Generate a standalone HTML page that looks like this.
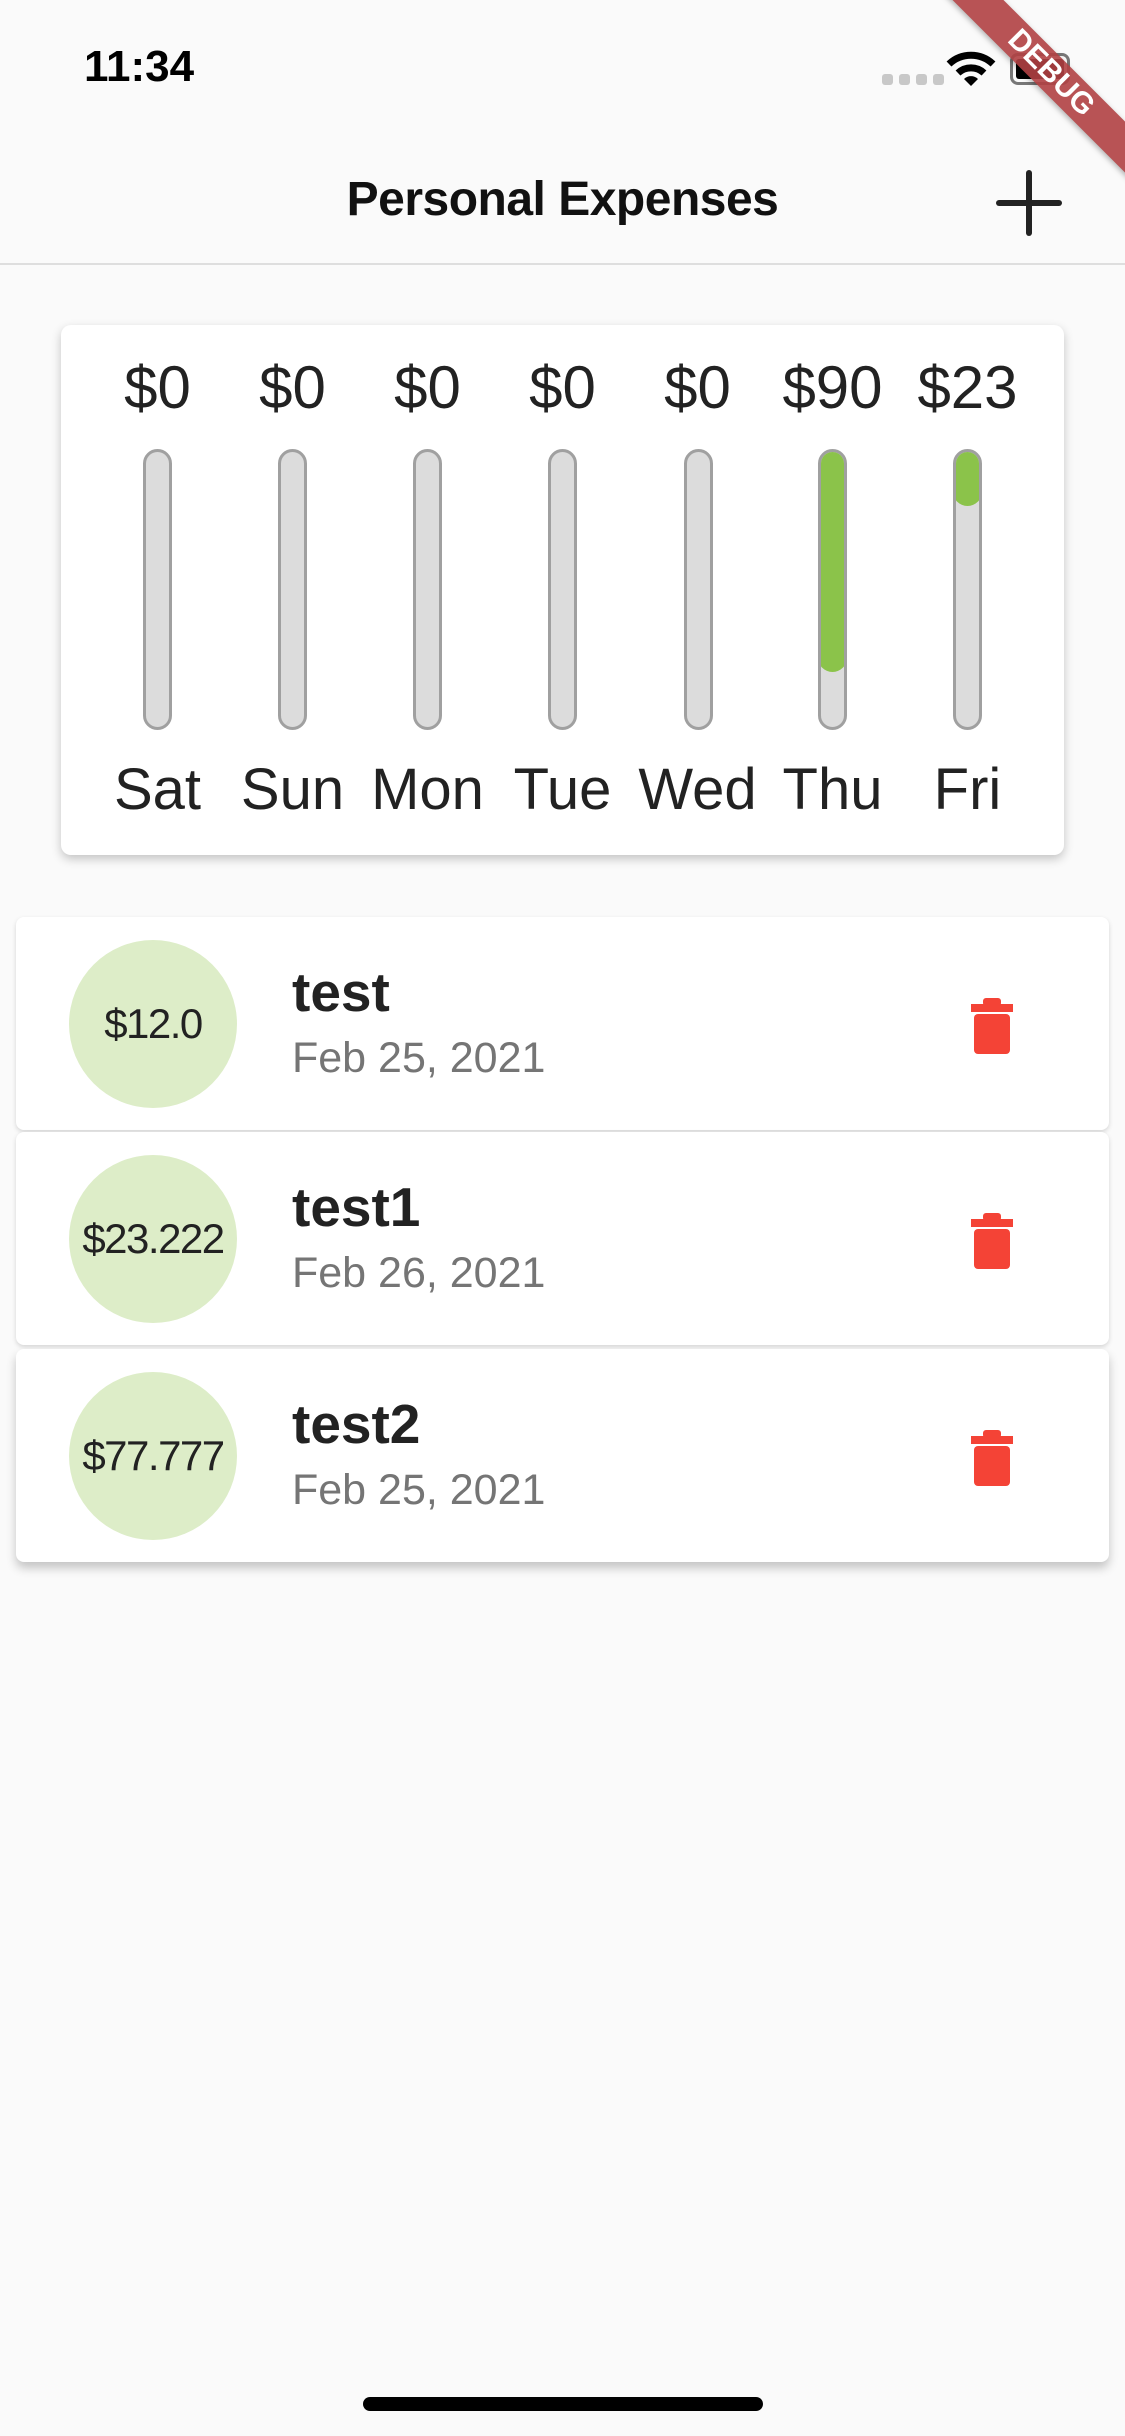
<!DOCTYPE html>
<html><head><meta charset="utf-8"><style>
*{margin:0;padding:0;box-sizing:border-box}
body{width:1125px;height:2436px;background:#fafafa;position:relative;overflow:hidden;font-family:"Liberation Sans",sans-serif;color:#222}
.abs{position:absolute}
.card{position:absolute;background:#fff;border-radius:10px;box-shadow:0 4px 10px rgba(0,0,0,.22)}
.amt{position:absolute;width:135px;text-align:center;font-size:60px;top:353px;color:#222;white-space:nowrap}
.day{position:absolute;width:135px;text-align:center;font-size:58px;top:756px;color:#222;white-space:nowrap}
.bar{position:absolute;top:449px;width:29px;height:281px;background:#dcdcdc;border:3px solid #a0a0a0;border-radius:15px;overflow:hidden}
.fill{position:absolute;left:-3px;top:-3px;width:29px;background:#8bc34a;border-radius:15px}
.item{position:absolute;left:16px;width:1093px;height:213px;background:#fff;border-radius:8px;box-shadow:0 2px 5px rgba(0,0,0,.15)}
.circ{position:absolute;left:53px;top:23px;width:168px;height:168px;border-radius:50%;background:#ddedc8;display:flex;align-items:center;justify-content:center;font-size:42px;color:#222;letter-spacing:-1.5px}
.t{position:absolute;left:276px;top:43px;font-size:55px;font-weight:bold;color:#222}
.d{position:absolute;left:276px;top:117px;font-size:43px;color:#757575}
.tr{position:absolute;left:955px;top:81px}
</style></head><body>
<div class="abs" style="left:84px;top:42px;font-size:44px;font-weight:bold;color:#000">11:34</div>
<div class="abs" style="left:882px;top:74px;display:flex;gap:6px"><i style="width:11px;height:11px;border-radius:3px;background:#c8c8c8;display:block"></i><i style="width:11px;height:11px;border-radius:3px;background:#c8c8c8;display:block"></i><i style="width:11px;height:11px;border-radius:3px;background:#c8c8c8;display:block"></i><i style="width:11px;height:11px;border-radius:3px;background:#c8c8c8;display:block"></i></div>
<svg class="abs" style="left:946px;top:50px" width="50" height="38" viewBox="0 0 50 38"><path d="M3 14 A32 32 0 0 1 47 14" stroke="#000" stroke-width="7" fill="none"/><path d="M12 23 A19 19 0 0 1 38 23" stroke="#000" stroke-width="7" fill="none"/><path d="M18 29 L25 36 L32 29 A10 10 0 0 0 18 29Z" fill="#000"/></svg>
<div class="abs" style="left:1010px;top:53px;width:60px;height:32px;border:3px solid #777;border-radius:8px;padding:3px"><div style="background:#000;width:100%;height:100%;border-radius:3px"></div></div>
<div class="abs" style="left:0;width:1125px;text-align:center;top:172px;font-size:48px;font-weight:bold;color:#111;letter-spacing:-0.5px">Personal Expenses</div>
<div class="abs" style="left:996px;top:200px;width:66px;height:6px;background:#222;border-radius:3px"></div>
<div class="abs" style="left:1026px;top:170px;width:6px;height:66px;background:#222;border-radius:3px"></div>
<div class="abs" style="left:0;top:263px;width:1125px;height:2px;background:#dedede"></div>
<div class="abs" style="left:851px;top:55px;width:400px;height:36px;background:rgba(176,64,66,.9);transform:rotate(45deg);color:#fff;font-weight:bold;font-size:30px;text-align:center;line-height:36px;box-shadow:0 2px 6px rgba(0,0,0,.3)">DEBUG</div>

<div class="card" style="left:61px;top:325px;width:1003px;height:530px"></div>
<div class="amt" style="left:90px">$0</div><div class="amt" style="left:225px">$0</div><div class="amt" style="left:360px">$0</div><div class="amt" style="left:495px">$0</div><div class="amt" style="left:630px">$0</div><div class="amt" style="left:765px">$90</div><div class="amt" style="left:900px">$23</div>
<div class="bar" style="left:143px"></div><div class="bar" style="left:278px"></div><div class="bar" style="left:413px"></div><div class="bar" style="left:548px"></div><div class="bar" style="left:684px"></div>
<div class="bar" style="left:818px"><div class="fill" style="height:223px"></div></div>
<div class="bar" style="left:953px"><div class="fill" style="height:57px"></div></div>
<div class="day" style="left:90px">Sat</div><div class="day" style="left:225px">Sun</div><div class="day" style="left:360px">Mon</div><div class="day" style="left:495px">Tue</div><div class="day" style="left:630px">Wed</div><div class="day" style="left:765px">Thu</div><div class="day" style="left:900px">Fri</div>

<div class="item" style="top:917px"><div class="circ">$12.0</div><div class="t">test</div><div class="d">Feb 25, 2021</div>
<svg class="tr" width="42" height="56" viewBox="0 0 42 56"><rect x="0" y="6" width="42" height="8" fill="#f44336"/><rect x="12" y="0" width="18" height="8" rx="3" fill="#f44336"/><rect x="3" y="16" width="36" height="40" rx="4" fill="#f44336"/></svg></div>
<div class="item" style="top:1132px"><div class="circ">$23.222</div><div class="t">test1</div><div class="d">Feb 26, 2021</div>
<svg class="tr" width="42" height="56" viewBox="0 0 42 56"><rect x="0" y="6" width="42" height="8" fill="#f44336"/><rect x="12" y="0" width="18" height="8" rx="3" fill="#f44336"/><rect x="3" y="16" width="36" height="40" rx="4" fill="#f44336"/></svg></div>
<div class="item" style="top:1349px;box-shadow:0 6px 10px rgba(0,0,0,.22)"><div class="circ">$77.777</div><div class="t">test2</div><div class="d">Feb 25, 2021</div>
<svg class="tr" width="42" height="56" viewBox="0 0 42 56"><rect x="0" y="6" width="42" height="8" fill="#f44336"/><rect x="12" y="0" width="18" height="8" rx="3" fill="#f44336"/><rect x="3" y="16" width="36" height="40" rx="4" fill="#f44336"/></svg></div>

<div class="abs" style="left:363px;top:2397px;width:400px;height:14px;border-radius:7px;background:#000"></div>
</body></html>
